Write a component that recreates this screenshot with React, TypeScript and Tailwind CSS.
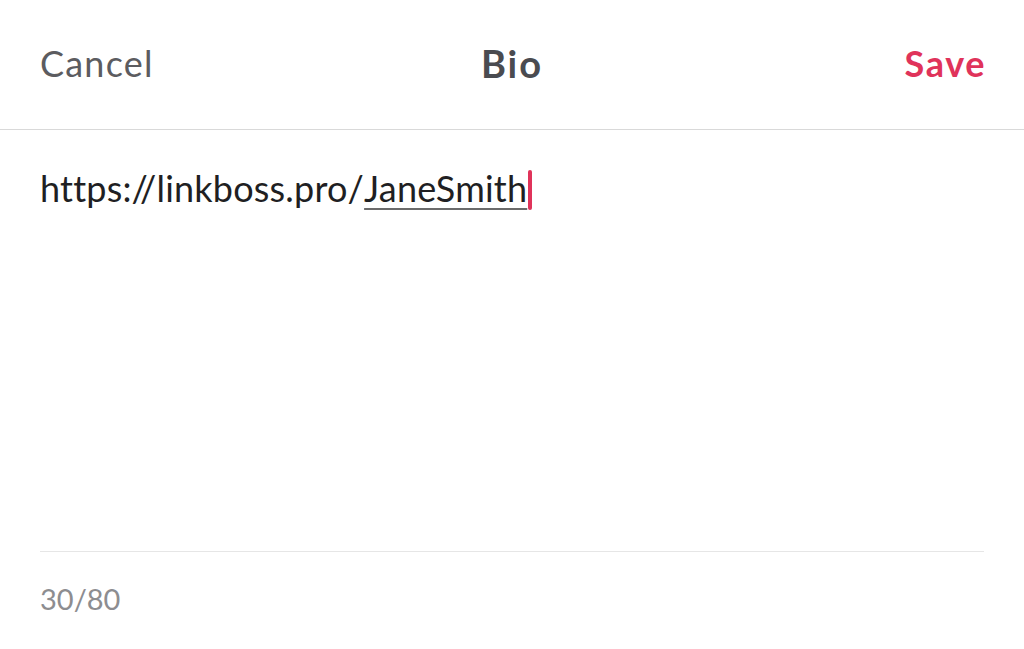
export default function App() {
  const bio = "https://linkboss.pro/";
  const handle = "JaneSmith";
  const max = 80;
  const count = (bio + handle).length;

  return (
    <div className="w-[1024px] h-[649px] bg-white flex flex-col font-['Lato','Noto_Sans',sans-serif] overflow-hidden">
      {/* top bar */}
      <header className="h-[130px] grid grid-cols-3 items-center px-10 border-b border-[#d9d9d9] shrink-0">
        <button className="justify-self-start text-[36px] tracking-[1.2px] text-[#5c5c60] leading-none pb-1">
          Cancel
        </button>
        <h1 className="justify-self-center text-[38px] tracking-[2px] font-bold text-[#4a4b50] leading-none pb-1">
          Bio
        </h1>
        <button className="justify-self-end -mr-[2px] text-[36px] tracking-[1.6px] font-bold text-[#e0335a] leading-none pb-1">
          Save
        </button>
      </header>

      {/* editor */}
      <div className="flex-1 px-10 pt-[40px]">
        <p className="text-[36px] tracking-[0.2px] text-[#1f1f23] leading-none flex items-end">
          <span>{bio}</span>
          <span className="underline decoration-[#6b6b6b] decoration-2 underline-offset-[6px]">{handle}</span>
          <span className="w-[4px] h-[40px] bg-[#e0335a] rounded-full ml-[1px] mb-[-4px]" />
        </p>
      </div>

      {/* counter */}
      <div className="mx-10 h-[98px] shrink-0 border-t border-[#e6e6e6] flex items-center pb-[4px]">
        <span className="text-[29px] text-[#8d8d90] leading-none">
          {count}/{max}
        </span>
      </div>
    </div>
  );
}
